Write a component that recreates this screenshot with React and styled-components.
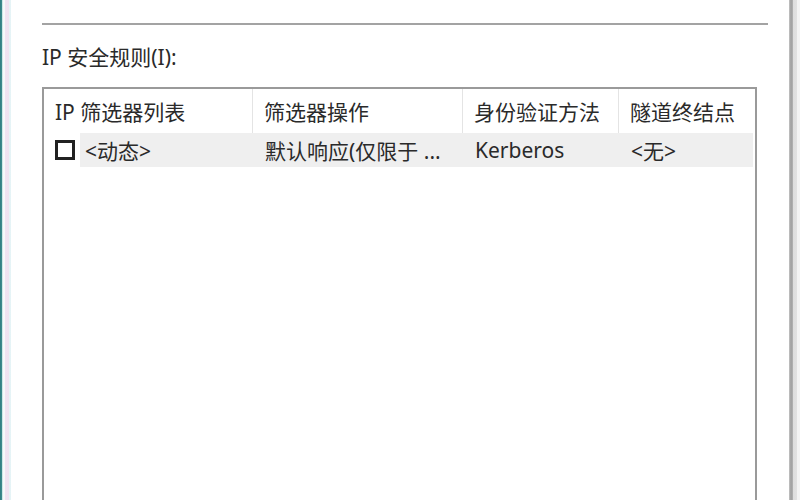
import React from 'react'
import styled, { createGlobalStyle } from 'styled-components'

const GlobalStyle = createGlobalStyle`
	html, body {
		margin: 0;
		padding: 0;
		background: #ffffff;
	}

	body {
		font-family: 'Noto Sans', 'Noto Sans CJK SC', sans-serif;
		color: #2a2a2a;
	}
`

const columns = '209px 210px 156px 1fr'

const headers = ['IP 筛选器列表', '筛选器操作', '身份验证方法', '隧道终结点']

const rules = [
	{
		filter: '<动态>',
		action: '默认响应(仅限于 ...',
		auth: 'Kerberos',
		tunnel: '<无>',
		checked: false,
	},
]

const App = () => {
	return (
		<>
			<GlobalStyle />
			<SWindow>
				<LeftFrame />

				<Dialog>
					<Separator />

					<FieldLabel>IP 安全规则(I):</FieldLabel>

					<ListBox>
						<HeaderRow>
							{headers.map((h) => (
								<HeaderCell key={h}>{h}</HeaderCell>
							))}
						</HeaderRow>

						{rules.map((r) => (
							<RuleRow key={r.filter}>
								<Cell>
									<CheckBox $checked={r.checked} />
									<span>{r.filter}</span>
								</Cell>
								<Cell>{r.action}</Cell>
								<Cell>{r.auth}</Cell>
								<Cell>{r.tunnel}</Cell>
							</RuleRow>
						))}
					</ListBox>
				</Dialog>

				<RightFrame />
			</SWindow>
		</>
	)
}

export default App

const SWindow = styled.div`
	display: flex;
	width: 800px;
	height: 500px;
	overflow: hidden;
	background: #ffffff;
`

const LeftFrame = styled.div`
	flex: 0 0 14px;
	background: linear-gradient(
		to right,
		#2f7c80 0px,
		#3f8f92 2px,
		#a9d2d3 2px,
		#f4f9fa 3px,
		#f6fafb 5px,
		#efe4f2 5px,
		#eee3f1 9px,
		#e4f3f6 9px,
		#e6f4f6 11px,
		#ffffff 11px
	);
`

const RightFrame = styled.div`
	flex: 0 0 14px;
	background: linear-gradient(
		to right,
		#ffffff 0px,
		#ffffff 3px,
		#c4c4c4 3px,
		#9e9e9e 5px,
		#b5b5b5 7px,
		#dedede 7px,
		#e2e2e2 11px,
		#f4f4f4 11px
	);
`

const Dialog = styled.div`
	flex: 1;
	display: flex;
	flex-direction: column;
	padding-left: 28px;
	min-width: 0;
`

const Separator = styled.div`
	height: 2px;
	margin-top: 23px;
	margin-right: 18px;
	background: #a3a3a3;
`

const FieldLabel = styled.div`
	margin-top: 20px;
	font-size: 21px;
	line-height: 24px;
	color: #2a2a2a;
`

const ListBox = styled.div`
	flex: 1;
	margin-top: 18px;
	margin-right: 29px;
	border: 2px solid #9a9a9a;
	border-bottom: none;
	background: #ffffff;
`

const HeaderRow = styled.div`
	display: grid;
	grid-template-columns: ${columns};
	height: 44px;
`

const HeaderCell = styled.div`
	display: flex;
	align-items: center;
	padding: 0 11px;
	font-size: 21px;
	white-space: nowrap;
	overflow: hidden;
	color: #2a2a2a;
	border-right: 1px solid #e4e4e4;

	&:last-child {
		border-right: none;
	}
`

const RuleRow = styled.div`
	display: grid;
	grid-template-columns: ${columns};
	height: 34px;
	margin-right: 2px;
	background: linear-gradient(to right, transparent 36px, #efefef 36px);
`

const Cell = styled.div`
	display: flex;
	align-items: center;
	gap: 10px;
	padding: 0 11px;
	font-size: 21px;
	white-space: nowrap;
	overflow: hidden;
	color: #2a2a2a;

	& + & {
		padding-left: 12px;
	}
`

const CheckBox = styled.span`
	flex: 0 0 auto;
	box-sizing: border-box;
	width: 20px;
	height: 20px;
	border: 3px solid #222222;
	background: ${(p) => (p.$checked ? '#222222' : '#ffffff')};
`
